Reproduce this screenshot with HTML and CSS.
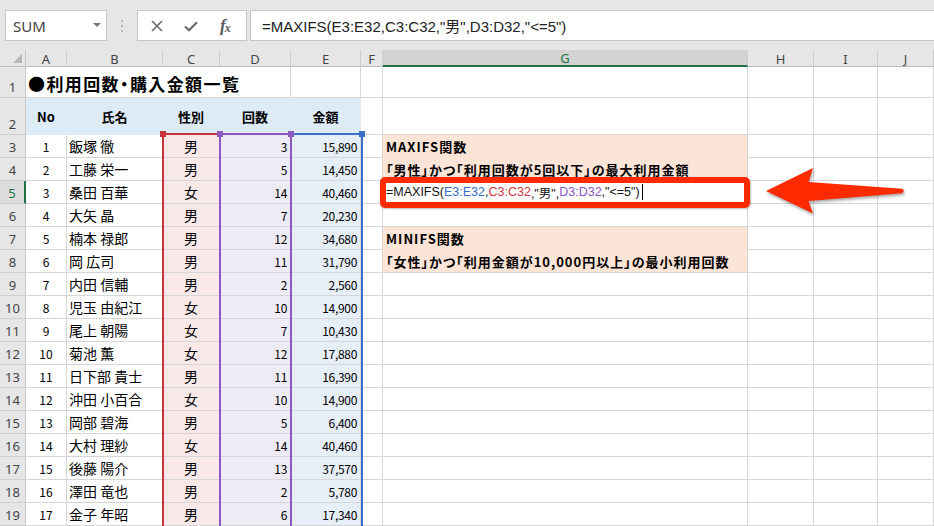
FILE: index.html
```html
<!DOCTYPE html>
<html lang="ja">
<head>
<meta charset="utf-8">
<title>MAXIFS</title>
<link rel="stylesheet" href="styles.css">
</head>
<body>
<div class="app">
  <div class="toolbar">
    <div class="namebox"><span>SUM</span><i class="caret"></i></div>
    <div class="grip"><i></i><i></i><i></i></div>
    <div class="btns">
      <svg class="ico-x" width="12" height="12" viewBox="0 0 12 12"><path d="M1 1L11 11M11 1L1 11" stroke="#6a6a6a" stroke-width="1.6" fill="none"/></svg>
      <svg class="ico-ok" width="14" height="11" viewBox="0 0 14 11"><path d="M1 5.5L5 9.2L13 1.2" stroke="#6a6a6a" stroke-width="2.2" fill="none"/></svg>
      <span class="fx">f<sub>x</sub></span>
    </div>
    <div class="fbar">=MAXIFS(E3:E32,C3:C32,"男",D3:D32,"&lt;=5")</div>
  </div>

  <div class="sheet">
    <div class="c corner"><i></i></div><div class="c ch">A</div><div class="c ch">B</div><div class="c ch">C</div><div class="c ch">D</div><div class="c ch">E</div><div class="c ch">F</div><div class="c ch sel">G</div><div class="c ch">H</div><div class="c ch">I</div><div class="c ch">J</div>

    <div class="c rh">1</div><div class="c title">●利用回数・購入金額一覧</div><div class="c"></div><div class="c"></div><div class="c"></div><div class="c"></div><div class="c"></div><div class="c"></div>

    <div class="c rh">2</div><div class="c hd">No</div><div class="c hd">氏名</div><div class="c hd">性別</div><div class="c hd">回数</div><div class="c hd">金額</div><div class="c"></div><div class="c"></div><div class="c"></div><div class="c"></div><div class="c"></div>

    <div class="c rh">3</div><div class="c ca">1</div><div class="c cb">飯塚 徹</div><div class="c cc">男</div><div class="c cd">3</div><div class="c ce">15,890</div><div class="c"></div><div class="c cg pe pt">MAXIFS関数</div><div class="c"></div><div class="c"></div><div class="c"></div>
    <div class="c rh">4</div><div class="c ca">2</div><div class="c cb">工藤 栄一</div><div class="c cc">男</div><div class="c cd">5</div><div class="c ce">14,450</div><div class="c"></div><div class="c cg pe">「男性」かつ「利用回数が5回以下」の最大利用金額</div><div class="c"></div><div class="c"></div><div class="c"></div>
    <div class="c rh sel">5</div><div class="c ca">3</div><div class="c cb">桑田 百華</div><div class="c cc">女</div><div class="c cd">14</div><div class="c ce">40,460</div><div class="c"></div><div class="c cg edit">=MAXIFS(<span class="rb">E3:E32</span>,<span class="rr">C3:C32</span>,"男",<span class="rp">D3:D32</span>,"&lt;=5")<i class="cursor"></i></div><div class="c"></div><div class="c"></div><div class="c"></div>
    <div class="c rh">6</div><div class="c ca">4</div><div class="c cb">大矢 晶</div><div class="c cc">男</div><div class="c cd">7</div><div class="c ce">20,230</div><div class="c"></div><div class="c cg"></div><div class="c"></div><div class="c"></div><div class="c"></div>
    <div class="c rh">7</div><div class="c ca">5</div><div class="c cb">楠本 禄郎</div><div class="c cc">男</div><div class="c cd">12</div><div class="c ce">34,680</div><div class="c"></div><div class="c cg pe pt">MINIFS関数</div><div class="c"></div><div class="c"></div><div class="c"></div>
    <div class="c rh">8</div><div class="c ca">6</div><div class="c cb">岡 広司</div><div class="c cc">男</div><div class="c cd">11</div><div class="c ce">31,790</div><div class="c"></div><div class="c cg pe">「女性」かつ「利用金額が10,000円以上」の最小利用回数</div><div class="c"></div><div class="c"></div><div class="c"></div>
    <div class="c rh">9</div><div class="c ca">7</div><div class="c cb">内田 信輔</div><div class="c cc">男</div><div class="c cd">2</div><div class="c ce">2,560</div><div class="c"></div><div class="c cg"></div><div class="c"></div><div class="c"></div><div class="c"></div>
    <div class="c rh">10</div><div class="c ca">8</div><div class="c cb">児玉 由紀江</div><div class="c cc">女</div><div class="c cd">10</div><div class="c ce">14,900</div><div class="c"></div><div class="c cg"></div><div class="c"></div><div class="c"></div><div class="c"></div>
    <div class="c rh">11</div><div class="c ca">9</div><div class="c cb">尾上 朝陽</div><div class="c cc">女</div><div class="c cd">7</div><div class="c ce">10,430</div><div class="c"></div><div class="c cg"></div><div class="c"></div><div class="c"></div><div class="c"></div>
    <div class="c rh">12</div><div class="c ca">10</div><div class="c cb">菊池 薫</div><div class="c cc">女</div><div class="c cd">12</div><div class="c ce">17,880</div><div class="c"></div><div class="c cg"></div><div class="c"></div><div class="c"></div><div class="c"></div>
    <div class="c rh">13</div><div class="c ca">11</div><div class="c cb">日下部 貴士</div><div class="c cc">男</div><div class="c cd">11</div><div class="c ce">16,390</div><div class="c"></div><div class="c cg"></div><div class="c"></div><div class="c"></div><div class="c"></div>
    <div class="c rh">14</div><div class="c ca">12</div><div class="c cb">沖田 小百合</div><div class="c cc">女</div><div class="c cd">10</div><div class="c ce">14,900</div><div class="c"></div><div class="c cg"></div><div class="c"></div><div class="c"></div><div class="c"></div>
    <div class="c rh">15</div><div class="c ca">13</div><div class="c cb">岡部 碧海</div><div class="c cc">男</div><div class="c cd">5</div><div class="c ce">6,400</div><div class="c"></div><div class="c cg"></div><div class="c"></div><div class="c"></div><div class="c"></div>
    <div class="c rh">16</div><div class="c ca">14</div><div class="c cb">大村 理紗</div><div class="c cc">女</div><div class="c cd">14</div><div class="c ce">40,460</div><div class="c"></div><div class="c cg"></div><div class="c"></div><div class="c"></div><div class="c"></div>
    <div class="c rh">17</div><div class="c ca">15</div><div class="c cb">後藤 陽介</div><div class="c cc">男</div><div class="c cd">13</div><div class="c ce">37,570</div><div class="c"></div><div class="c cg"></div><div class="c"></div><div class="c"></div><div class="c"></div>
    <div class="c rh">18</div><div class="c ca">16</div><div class="c cb">澤田 竜也</div><div class="c cc">男</div><div class="c cd">2</div><div class="c ce">5,780</div><div class="c"></div><div class="c cg"></div><div class="c"></div><div class="c"></div><div class="c"></div>
    <div class="c rh">19</div><div class="c ca">17</div><div class="c cb">金子 年昭</div><div class="c cc">男</div><div class="c cd">6</div><div class="c ce">17,340</div><div class="c"></div><div class="c cg"></div><div class="c"></div><div class="c"></div><div class="c"></div>
  </div>

  <div class="range range-c"><i class="sq tl"></i><i class="sq tr"></i></div>
  <div class="range range-e"><i class="sq tl"></i><i class="sq tr"></i></div>
  <div class="range range-d"><i class="sq tl"></i><i class="sq tr"></i></div>

  <div class="callout"></div>
  <svg class="arrow" width="150" height="60" viewBox="760 160 150 60">
    <path d="M766 191 L813 168 L808.5 182 L902 188.8 Q905.5 190.5 902 193.2 L808.5 201 L813 213.5 Z" fill="#ff2a00"/>
  </svg>
</div>
</body>
</html>
```

FILE: styles.css
```css
* { box-sizing: border-box; }
html, body { margin: 0; padding: 0; }
body {
  width: 934px;
  height: 526px;
  overflow: hidden;
  background: #fff;
  font-family: "Noto Sans CJK JP", "Noto Sans", sans-serif;
}
.app { position: relative; width: 934px; height: 526px; overflow: hidden; }

/* toolbar */
.toolbar {
  height: 50px;
  background: #e6e6e6;
  display: flex;
  align-items: flex-start;
  padding: 10px 0 0 5px;
}
.namebox {
  width: 102px;
  height: 31px;
  background: #fff;
  border: 1px solid #c6c6c6;
  display: flex;
  align-items: center;
  justify-content: space-between;
  padding: 1px 5px 0 7px;
  font-family: "Noto Sans", sans-serif;
  font-size: 15px;
  color: #444;
}
.caret {
  width: 0; height: 0;
  border-left: 4px solid transparent;
  border-right: 4px solid transparent;
  border-top: 4px solid #777;
  margin-bottom: 3px;
}
.grip {
  width: 30px;
  height: 31px;
  display: flex;
  flex-direction: column;
  align-items: center;
  justify-content: center;
  gap: 3px;
}
.grip i { display: block; width: 2px; height: 2px; background: #b5b5b5; }
.btns {
  width: 110px;
  height: 31px;
  background: #fff;
  border: 1px solid #c6c6c6;
  display: flex;
  align-items: center;
  padding-left: 13px;
}
.ico-ok { margin-left: 21px; margin-top: 2px; }
.fx {
  margin-left: 22px;
  font-family: "Liberation Serif", serif;
  font-style: italic;
  font-weight: 700;
  font-size: 17px;
  color: #5a5a5a;
  line-height: 1;
  letter-spacing: -1px;
}
.fx sub { font-size: 12px; vertical-align: -1px; }
.fbar {
  flex: 1;
  margin-left: 3px;
  height: 31px;
  background: #fff;
  border: 1px solid #c6c6c6;
  border-right: 0;
  display: flex;
  align-items: center;
  padding-left: 11px;
  font-family: "Liberation Sans", Arial, "Noto Sans CJK JP", sans-serif;
  font-size: 15px;
  color: #222;
}

/* sheet */
.sheet {
  display: grid;
  grid-template-columns: 26px 41px 96px 57px 71px 70px 22px 365px 66px 64px 56px;
  grid-template-rows: 17px 31px 37px repeat(17, 23px);
}
.c {
  border-right: 1px solid #d6d6d6;
  border-bottom: 1px solid #d6d6d6;
  display: flex;
  align-items: center;
  white-space: nowrap;
  font-size: 14px;
  color: #000;
  min-width: 0;
}
.corner {
  background: #e6e6e6;
  border-right-color: #c8c8c8;
  border-bottom-color: #bdbdbd;
  justify-content: flex-end;
  align-items: flex-end;
  padding: 0 3px 3px 0;
}
.corner i {
  display: block;
  width: 0; height: 0;
  border-left: 9px solid transparent;
  border-bottom: 9px solid #b8b8b8;
}
.ch {
  background: #e6e6e6;
  border-right-color: #cdcdcd;
  border-bottom-color: #bdbdbd;
  justify-content: center;
  font-family: "Noto Sans", sans-serif;
  font-size: 13px;
  color: #444;
  padding-top: 1px;
}
.ch.sel {
  background: #d3d3d3;
  color: #217346;
  border-bottom: 2px solid #217346;
}
.rh {
  background: #e6e6e6;
  border-right-color: #c8c8c8;
  border-bottom-color: #cfcfcf;
  justify-content: center;
  align-items: flex-end;
  padding-bottom: 1px;
  font-family: "Noto Sans", sans-serif;
  font-size: 13px;
  color: #444;
}
.rh.sel {
  color: #217346;
  background: #dcdcdc;
  border-right: 2px solid #217346;
}

.title {
  grid-column: span 4;
  font-weight: 700;
  font-size: 17px;
  letter-spacing: 1.4px;
  font-feature-settings: "palt";
  padding: 2px 0 0 2px;
}
.hd {
  background: #ddebf7;
  border-color: #ddebf7;
  justify-content: center;
  font-weight: 700;
  font-size: 13px;
}
.ca { justify-content: center; font-size: 12px; }
.cb { padding-left: 2px; }
.cc { background: #f8e8e8; justify-content: center; }
.cd, .ce {
  justify-content: flex-end;
  padding-right: 3px;
  font-size: 12px;
  letter-spacing: -0.3px;
}
.cd { background: #efebf6; }
.ce { background: #e6eef8; }
.cg { padding-left: 3px; }
.pe {
  background: #fce4d6;
  font-weight: 700;
  font-size: 13px;
  letter-spacing: 1px;
  font-feature-settings: "palt";
}
.pe.pt { border-bottom-color: #fce4d6; }
.edit {
  font-family: "Liberation Sans", Arial, "Noto Sans CJK JP", sans-serif;
  font-size: 12.5px;
  color: #111;
}
.rb { color: #3a6fcc; }
.rr { color: #d0363c; }
.rp { color: #8a56c4; }
.cursor {
  display: block;
  width: 1px;
  height: 16px;
  background: #000;
  margin-left: 2px;
}

/* referenced range outlines */
.range {
  position: absolute;
  top: 133px;
  height: 420px;
  border: 2px solid;
  border-bottom: 0;
}
.range-c { left: 162px; width: 59px; border-color: #c4343c; }
.range-d { left: 219px; width: 73px; border-color: #8a5ac2; }
.range-e { left: 290px; width: 73px; border-color: #3a70c8; }
.sq {
  position: absolute;
  top: -4px;
  width: 6px;
  height: 6px;
}
.range-c .sq { background: #c4343c; }
.range-d .sq { background: #8a5ac2; }
.range-e .sq { background: #3a70c8; }
.sq.tl { left: -4px; }
.sq.tr { right: -4px; }

/* annotations */
.callout {
  position: absolute;
  left: 380px;
  top: 177px;
  width: 370px;
  height: 31px;
  border: 6px solid #ff2a00;
  border-radius: 5px;
  box-shadow: 1px 1px 2px rgba(0, 0, 0, 0.25);
}
.arrow {
  position: absolute;
  left: 760px;
  top: 160px;
  filter: drop-shadow(1px 2px 1.5px rgba(0, 0, 0, 0.35));
}
```
